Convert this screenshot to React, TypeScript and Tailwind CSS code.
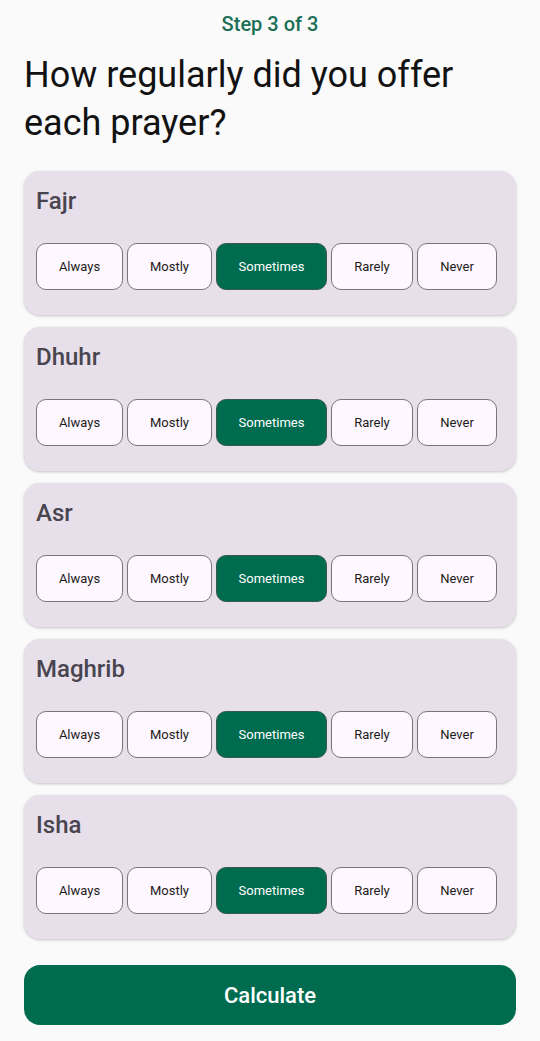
import React from "react";

const prayers = ["Fajr", "Dhuhr", "Asr", "Maghrib", "Isha"];
const options: { label: string; w: string }[] = [
  { label: "Always", w: "w-[87px]" },
  { label: "Mostly", w: "w-[85px]" },
  { label: "Sometimes", w: "w-[111px]" },
  { label: "Rarely", w: "w-[82px]" },
  { label: "Never", w: "w-[80px]" },
];

export default function App() {
  return (
    <div
      className="min-h-[1041px] w-[540px] bg-[#fafafa] px-6"
      style={{ fontFamily: "Roboto, 'Noto Sans', sans-serif" }}
    >
      <div className="pt-[10px] text-center text-[20px] leading-[28px] font-medium text-[#1b6f56]">
        Step 3 of 3
      </div>
      <h1 className="mt-[13px] text-[36px] leading-[48px] font-normal text-[#121212]">
        How regularly did you offer each prayer?
      </h1>
      <div className="mt-[24px] flex flex-col gap-3">
        {prayers.map((p) => (
          <div
            key={p}
            className="rounded-[16px] bg-[#e7e0eb] px-3 pt-[14px] pb-[25px] shadow-[0_1px_3px_rgba(0,0,0,0.22)]"
          >
            <div className="text-[24px] leading-[32px] font-medium text-[#49454f]">{p}</div>
            <div className="mt-[26px] flex gap-1">
              {options.map((o) => {
                const sel = o.label === "Sometimes";
                return (
                  <div
                    key={o.label}
                    className={
                      sel
                        ? `${o.w} flex h-[47px] items-center justify-center rounded-[10px] border border-[#3a5a4e] bg-[#006c4f] text-[13px] font-normal text-white`
                        : `${o.w} flex h-[47px] items-center justify-center rounded-[10px] border border-[#79747e] bg-[#fef7ff] text-[13px] font-normal text-[#1d1b20]`
                    }
                  >
                    {o.label}
                  </div>
                );
              })}
            </div>
          </div>
        ))}
      </div>
      <button className="mt-[26px] flex h-[60px] w-full items-center justify-center rounded-[16px] bg-[#006c4f] text-[22px] font-medium text-white">
        Calculate
      </button>
    </div>
  );
}
